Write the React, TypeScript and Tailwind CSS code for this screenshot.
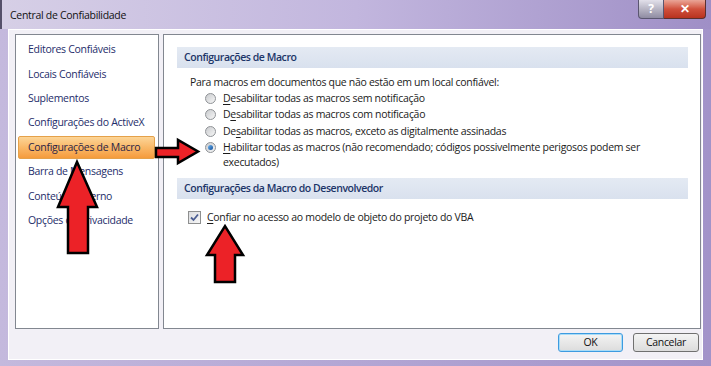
import React from "react";

const menuItems = [
  "Editores Confiáveis",
  "Locais Confiáveis",
  "Suplementos",
  "Configurações do ActiveX",
  "Configurações de Macro",
  "Barra de Mensagens",
  "Conteúdo Externo",
  "Opções de Privacidade",
];

function Radio({ checked }: { checked?: boolean }) {
  return (
    <span className="flex h-[11px] w-[11px] shrink-0 items-center justify-center rounded-full border border-[#8f9296] bg-gradient-to-br from-[#c9cbce] to-[#f7f7f7]">
      {checked && (
        <span className="h-[5px] w-[5px] rounded-full bg-gradient-to-br from-[#6fb5ee] to-[#0c4e9c]" />
      )}
    </span>
  );
}

function Underlined({ text, at }: { text: string; at: number }) {
  return (
    <>
      {text.slice(0, at)}
      <span className="underline underline-offset-2">{text[at]}</span>
      {text.slice(at + 1)}
    </>
  );
}

function SectionHeader({ children }: { children: React.ReactNode }) {
  return (
    <div className="ml-[13px] mr-[12px] flex h-[21px] items-center bg-gradient-to-b from-[#e4eaf3] to-[#d9e1ee] pl-[7px] text-[10.5px] font-semibold tracking-[-0.45px] text-[#1c3568]">
      {children}
    </div>
  );
}

export default function App() {
  return (
    <div className="relative h-[366px] w-[711px] overflow-hidden bg-gradient-to-r from-[#c4b9dd] via-[#b3a6d4] to-[#a293c9] font-['Open_Sans',sans-serif] text-[10.5px] tracking-[-0.3px] text-[#1b1b1b]">
      {/* title bar */}
      <div className="flex h-[29px] items-start justify-between border-l-2 border-[#55506a] bg-gradient-to-r from-[#d6cfe6] via-[#c2b6de] to-[#9f8fc6]">
        <div className="pl-[8px] pt-[8px] text-[10.5px] text-[#111]">Central de Confiabilidade</div>
        <div className="mr-[5px] flex h-[19px]">
          <div className="flex w-[26px] items-center justify-center rounded-bl-[4px] border border-t-0 border-[#5a5670] bg-gradient-to-b from-[#e2e0ea] via-[#b7b5c4] to-[#8f8ca2] text-[12px] font-bold text-white">
            ?
          </div>
          <div className="flex w-[42px] items-center justify-center rounded-br-[4px] border border-l-0 border-t-0 border-[#5a3030] bg-gradient-to-b from-[#e9a597] via-[#d0503c] to-[#b8321e] text-[12px] font-bold text-white">
            ✕
          </div>
        </div>
      </div>

      {/* client area */}
      <div className="ml-[8px] flex h-[331px] w-[695px] flex-col border border-white bg-[#f2f0f6]">
        <div className="flex gap-[4px] pl-[6px] pr-[1px] pt-[4px]">
          {/* left nav */}
          <div className="h-[295px] w-[144px] border border-[#828790] bg-white pt-[3px]">
            {menuItems.map((item, i) => (
              <div key={item} className="flex h-[24.4px] items-center">
                {i === 4 ? (
                  <div className="ml-[2px] mr-[3px] flex h-[23px] flex-1 items-center rounded-[2px] border border-[#e5a14a] bg-gradient-to-b from-[#fcd597] via-[#f9b867] to-[#f59b3c] pl-[9px] text-[#2a2448]">
                    {item}
                  </div>
                ) : (
                  <div className="pl-[12px] text-[#1e2d6a]">{item}</div>
                )}
              </div>
            ))}
          </div>

          {/* right content */}
          <div className="h-[295px] flex-1 border border-[#828790] bg-white pt-[12px]">
            <SectionHeader>Configurações de Macro</SectionHeader>
            <div className="mt-[6px] pl-[26px] leading-[16px]">
              Para macros em documentos que não estão em um local confiável:
            </div>
            <div className="mt-[1px] flex flex-col gap-[1.3px] pl-[41px] leading-[15px]">
              <div className="flex items-center gap-[7px]">
                <Radio />
                <span>
                  <Underlined text="Desabilitar todas as macros sem notificação" at={0} />
                </span>
              </div>
              <div className="flex items-center gap-[7px]">
                <Radio />
                <span>
                  <Underlined text="Desabilitar todas as macros com notificação" at={1} />
                </span>
              </div>
              <div className="flex items-center gap-[7px]">
                <Radio />
                <span>
                  <Underlined text="Desabilitar todas as macros, exceto as digitalmente assinadas" at={2} />
                </span>
              </div>
              <div className="flex items-start gap-[7px]">
                <span className="mt-[2px]">
                  <Radio checked />
                </span>
                <span>
                  <Underlined
                    text="Habilitar todas as macros (não recomendado; códigos possivelmente perigosos podem ser"
                    at={0}
                  />
                  <br />
                  executados)
                </span>
              </div>
            </div>

            <div className="mt-[8px]">
              <SectionHeader>Configurações da Macro do Desenvolvedor</SectionHeader>
            </div>
            <div className="mt-[11px] flex items-center gap-[6px] pl-[24px]">
              <span className="flex h-[13px] w-[13px] items-center justify-center border border-[#8e8f8f] bg-gradient-to-br from-[#dcdde0] to-[#f6f6f6]">
                <svg width="9" height="9" viewBox="0 0 9 9">
                  <path d="M1 4.5 L3.5 7 L8 1.5" fill="none" stroke="#4b5d92" strokeWidth="1.8" />
                </svg>
              </span>
              <span>
                <Underlined text="Confiar no acesso ao modelo de objeto do projeto do VBA" at={0} />
              </span>
            </div>
          </div>
        </div>

        {/* buttons */}
        <div className="mt-[4px] flex justify-end gap-[10px] pr-[3px]">
          <button className="h-[19px] w-[65px] rounded-[3px] border border-[#3d9be0] bg-gradient-to-b from-[#f4f4f4] to-[#dcdcdc] text-[10.5px] text-[#111] shadow-[inset_0_0_0_1px_#a9dcf7]">
            OK
          </button>
          <button className="h-[19px] w-[66px] rounded-[3px] border border-[#707070] bg-gradient-to-b from-[#f4f4f4] to-[#dcdcdc] text-[10.5px] text-[#111]">
            Cancelar
          </button>
        </div>
      </div>

      {/* red arrows drawn over the dialog */}
      <svg className="pointer-events-none absolute left-0 top-0" width="711" height="366" viewBox="0 0 711 366">
        <g fill="#ec2227" stroke="#000" strokeWidth="2.5" strokeLinejoin="miter">
          <polygon points="156,148 178,148 178,140 198,151.5 178,163 178,157 156,157" />
          <polygon points="68,253 68,207 58,207 77,162 97,207 88,207 88,253" />
          <polygon points="215,282 215,255 207,255 225,226 243,255 235,255 235,282" />
        </g>
      </svg>
    </div>
  );
}
